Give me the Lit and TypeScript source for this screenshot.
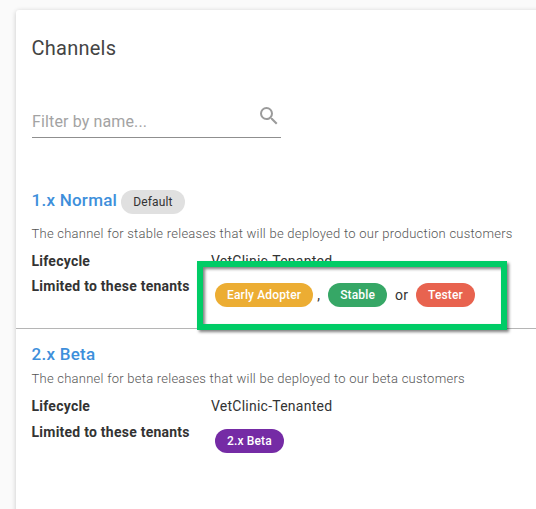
import { LitElement, html, css } from "lit";
import { customElement, property } from "lit/decorators.js";

type Tone = "neutral" | "amber" | "green" | "red" | "purple";

@customElement("tag-chip")
class TagChip extends LitElement {
  @property({ reflect: true }) tone: Tone = "neutral";

  static styles = css`
    :host {
      display: block;
      flex: none;
      box-sizing: border-box;
      height: 24px;
      padding: 0 12px;
      border-radius: 12px;
      font-size: 12px;
      line-height: 24px;
      letter-spacing: 0.14px;
      font-weight: 500;
      color: #fff;
      white-space: nowrap;
      text-align: center;
    }
    :host([tone="neutral"]) { background: #e0e0e0; color: #333; font-weight: 400; }
    :host([tone="amber"]) { background: #ecad33; }
    :host([tone="green"]) { background: #36a766; }
    :host([tone="red"]) { background: #e8634f; }
    :host([tone="purple"]) { background: #752ba5; }
  `;

  render() {
    return html`<slot></slot>`;
  }
}

@customElement("app-root")
class AppRoot extends LitElement {
  static styles = css`
    :host {
      display: block;
      box-sizing: border-box;
      height: 509px;
      padding: 10px 0 0 16px;
      overflow: hidden;
      background: #fafafa;
      font-family: Roboto, sans-serif;
      font-size: 14px;
      color: #333;
    }
    .card {
      position: relative;
      box-sizing: border-box;
      width: 560px;
      height: 520px;
      padding-top: 24px;
      background: #fff;
      border-radius: 3px;
      box-shadow: 0 1px 5px rgba(0, 0, 0, 0.2);
      white-space: nowrap;
    }
    h1 {
      margin: 0 15.5px;
      font-size: 20px;
      line-height: 28px;
      font-weight: 400;
      letter-spacing: 0.25px;
      color: #444;
    }
    .filter {
      display: flex;
      justify-content: space-between;
      box-sizing: border-box;
      width: 249px;
      height: 36px;
      margin: 40px 16px 0;
      border-bottom: 1px solid #8f8f8f;
      font-size: 16px;
      line-height: 40px;
      letter-spacing: 0.13px;
      color: #a3a3a3;
    }
    .filter svg { width: 24px; height: 24px; margin-top: 2px; fill: #9b9b9b; }
    .channel { padding: 0 15.5px; }
    .first { margin-top: 52px; height: 138px; border-bottom: 1px solid #b5b5b5; }
    .second { padding-top: 13px; }
    .heading { display: flex; height: 24px; gap: 4px; }
    h2 {
      margin: 0;
      font-size: 17px;
      line-height: 24px;
      font-weight: 500;
      letter-spacing: 0.25px;
      color: #3d8fdb;
    }
    .first h2 { line-height: 21px; }
    .desc {
      font-size: 13px;
      line-height: 20px;
      font-weight: 300;
      letter-spacing: 0.245px;
      color: #555;
    }
    .first .desc { margin-top: 10px; }
    .row { display: grid; grid-template-columns: 179.5px auto; line-height: 20px; letter-spacing: 0.24px; }
    .first .lifecycle { margin-top: 7px; }
    .second .desc { margin-top: 3px; }
    .second .lifecycle { margin-top: 7px; }
    .tenants { margin-top: 5px; }
    .second .tenants { margin-top: 6px; }
    .label { font-weight: 700; }
    .tags { display: flex; padding: 7px 0 0 4px; line-height: 24px; }
    .comma { width: 15px; text-indent: 4px; }
    .or { width: 29px; text-indent: 8px; }
    .callout {
      position: absolute;
      left: 181px;
      top: 251px;
      box-sizing: border-box;
      width: 310px;
      height: 69px;
      border: 6px solid #00cc66;
      filter: drop-shadow(2px 2px 1.5px rgba(0, 0, 0, 0.5));
    }
  `;

  render() {
    return html`
      <main class="card">
        <h1>Channels</h1>
        <div class="filter">
          <span>Filter by name...</span>
          <svg viewBox="0 0 24 24">
            <path d="M15.5 14h-.79l-.28-.27A6.47 6.47 0 0 0 16 9.5 6.5 6.5 0 1 0 9.5 16c1.61 0 3.09-.59 4.23-1.57l.27.28v.79l5 4.99L20.49 19l-4.99-5zm-6 0C7.01 14 5 11.99 5 9.5S7.01 5 9.5 5 14 7.01 14 9.5 11.99 14 9.5 14z" />
          </svg>
        </div>
        <section class="channel first">
          <div class="heading"><h2>1.x Normal</h2><tag-chip>Default</tag-chip></div>
          <div class="desc">The channel for stable releases that will be deployed to our production customers</div>
          <div class="row lifecycle"><span class="label">Lifecycle</span><span>VetClinic-Tenanted</span></div>
          <div class="row tenants">
            <span class="label">Limited to these tenants</span>
            <div class="tags">
              <tag-chip tone="amber">Early Adopter</tag-chip>
              <span class="comma">,</span>
              <tag-chip tone="green">Stable</tag-chip>
              <span class="or">or</span>
              <tag-chip tone="red">Tester</tag-chip>
            </div>
          </div>
        </section>
        <section class="channel second">
          <div class="heading"><h2>2.x Beta</h2></div>
          <div class="desc">The channel for beta releases that will be deployed to our beta customers</div>
          <div class="row lifecycle"><span class="label">Lifecycle</span><span>VetClinic-Tenanted</span></div>
          <div class="row tenants">
            <span class="label">Limited to these tenants</span>
            <div class="tags"><tag-chip tone="purple">2.x Beta</tag-chip></div>
          </div>
        </section>
        <div class="callout"></div>
      </main>
    `;
  }
}
